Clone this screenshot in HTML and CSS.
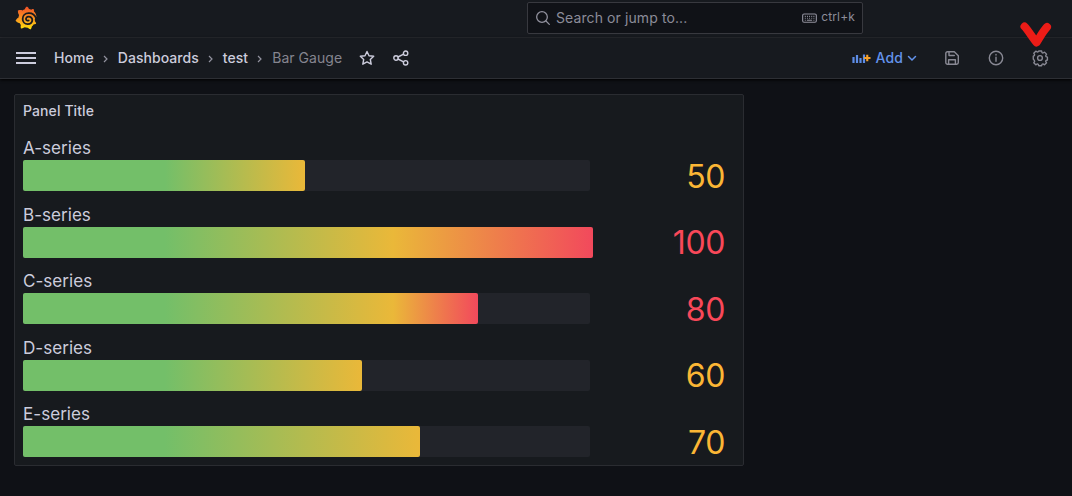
FILE: index.html
```html
<!DOCTYPE html>
<html lang="en">
<head>
<meta charset="utf-8">
<title>Bar Gauge</title>
<link rel="stylesheet" href="styles.css">
</head>
<body>
<header class="topbar">
  <svg class="logo" viewBox="0 0 351 365">
    <defs><linearGradient id="flame" x1="0" y1="1" x2="0" y2="0"><stop offset="0" stop-color="#ffe40a"/><stop offset=".4" stop-color="#fb9f1e"/><stop offset="1" stop-color="#f05028"/></linearGradient></defs>
    <path fill="url(#flame)" d="M342 161c-4-30-13-52-30-73-3-4-6-7-10-10 5-20-6-38-6-38-20-1-32 6-37 9-11-5-23-8-36-10C214 12 190 1 190 1c-27 17-32 41-32 41-15 4-27 10-40 19-38-14-72 3-72 3-3 40 15 65 19 70-5 13-7 26-9 40C19 193 9 228 9 228c29 33 63 36 63 36 6 11 14 21 22 30-10 30 2 55 2 55 32 1 53-14 58-17 16 5 34 8 52 7 15 22 42 25 42 25 19-20 20-40 20-45 13-9 23-21 32-35 22 1 37-13 37-13-4-23-17-34-20-36 1-12 0-25-2-37l15-27z"/>
    <path class="logo-spiral" d="M338 190C316 132 270 104 218 106C160 107 122 147 122 198C122 245 158 280 203 280C246 280 276 252 276 216C276 182 248 158 216 160C188 162 172 182 176 204C180 221 198 230 218 222"/>
  </svg>
  <div class="search">
    <svg class="search-icon" viewBox="0 0 24 24"><circle cx="10.5" cy="10.5" r="8"/><path d="M16.5 16.5l5 5"/></svg>
    <span class="search-text">Search or jump to...</span>
    <svg class="key-icon" viewBox="0 0 16 12"><rect x=".7" y="1.7" width="14.6" height="8.8" rx="1.5"/><path d="M3 4.3h1M5.3 4.3h1M7.6 4.3h1M9.9 4.3h1M12.2 4.3h1M3 6.3h1M5.3 6.3h1M7.6 6.3h1M9.9 6.3h1M12.2 6.3h1M3 8.4h1M5.2 8.4h5.6M12.2 8.4h1"/></svg>
    <span class="key-text">ctrl+k</span>
  </div>
</header>
<nav class="navbar">
  <svg class="menu" viewBox="0 0 20 14"><path d="M0 2h20M0 7h20M0 12h20"/></svg>
  <div class="crumbs">
    <span>Home</span>
    <svg class="sep" viewBox="0 0 5 8"><path d="M1 1l3 3-3 3"/></svg>
    <span>Dashboards</span>
    <svg class="sep" viewBox="0 0 5 8"><path d="M1 1l3 3-3 3"/></svg>
    <span>test</span>
    <svg class="sep" viewBox="0 0 5 8"><path d="M1 1l3 3-3 3"/></svg>
    <span class="current">Bar Gauge</span>
  </div>
  <svg class="icon bright star" viewBox="0 0 16 16"><path d="M8 1.5l2 4.2 4.7.6-3.4 3.2.9 4.7L8 11.9l-4.2 2.3.9-4.7L1.300 6.300l4.700-.6z"/></svg>
  <svg class="icon bright" viewBox="0 0 16 16"><circle cx="3" cy="8" r="2.2"/><circle cx="12.600" cy="3.200" r="2.200"/><circle cx="12.600" cy="12.800" r="2.200"/><path d="M5 7l5.600-2.800M5 9l5.600 2.800"/></svg>
  <div class="actions">
    <div class="add">
      <svg class="add-icon" viewBox="0 0 19 12"><path class="add-bars" d="M1.500 5v6M5 3v8M8.500 6v5M12 2.500V11"/><path class="add-plus" d="M12 6h6.500M15.250 2.750v6.500"/></svg>
      <span>Add</span>
      <svg class="caret" viewBox="0 0 10 7"><path d="M1.500 1.500L5 5l3.500-3.500"/></svg>
    </div>
    <svg class="icon" viewBox="0 0 16 16"><path d="M3.500 1.800h6.800l4 4v6.700a1.700 1.700 0 0 1-1.700 1.700H3.500a1.700 1.700 0 0 1-1.700-1.700V3.500a1.700 1.700 0 0 1 1.700-1.700zM5 2v3.500h5.300M4.600 14v-4.200h6.800V14"/></svg>
    <svg class="icon" viewBox="0 0 16 16"><circle cx="8" cy="8" r="6.700"/><path d="M8 7.300v4M8 4.400v.6"/></svg>
    <svg class="icon" viewBox="0 0 16 16"><path d="M6.500 1.200h3l.4 1.700 1 .4 1.600-.9 2.100 2.100-.9 1.600.4 1 1.400.4v3l-1.400.4-.4 1 .9 1.500-2.100 2.100-1.600-.9-1 .4-.4 1.400h-3l-.4-1.400-1-.4-1.600.9-2.100-2.100.9-1.500-.4-1L.9 9.500v-3l1-.4.4-1-.9-1.600 2.100-2.100 1.600.9 1-.4z" transform="translate(.4 -.2) scale(.97)"/><circle cx="8" cy="8" r="2.400"/></svg>
  </div>
</nav>
<svg class="pointer" viewBox="0 0 32 26"><path d="M4.500 4.500C8 8 12 15 16.500 20.500C20 15 22.500 10 27 5"/></svg>
<main class="page">
  <section class="panel">
    <h2 class="title">Panel Title</h2>
    <div class="gauges">
      <div class="gauge"><div class="name">A-series</div><div class="row"><div class="track"><div class="fill warm" style="width:282px"></div></div><div class="value">50</div></div></div>
      <div class="gauge"><div class="name">B-series</div><div class="row"><div class="track"><div class="fill hot" style="width:570px"></div></div><div class="value high">100</div></div></div>
      <div class="gauge"><div class="name">C-series</div><div class="row"><div class="track"><div class="fill hot" style="width:455px"></div></div><div class="value high">80</div></div></div>
      <div class="gauge"><div class="name">D-series</div><div class="row"><div class="track"><div class="fill warm" style="width:339px"></div></div><div class="value">60</div></div></div>
      <div class="gauge"><div class="name">E-series</div><div class="row"><div class="track"><div class="fill warm" style="width:397px"></div></div><div class="value">70</div></div></div>
    </div>
  </section>
</main>
</body>
</html>
```
FILE: styles.css
```css
* { box-sizing: border-box; }
body { margin: 0; height: 496px; overflow: hidden; background: #0f1116; color: #ccccdc; font: 14px/20px Inter, sans-serif; letter-spacing: .1px; }
svg { display: block; flex: none; fill: none; overflow: visible; }
.topbar { height: 38px; display: flex; align-items: flex-start; background: #171a1f; border-bottom: 1px solid #2a2c31; padding-left: 15px; }
.logo { width: 22px; height: 24px; margin-top: 6px; }
.logo-spiral { stroke: #171a1f; stroke-width: 29; stroke-linecap: round; }
.search { width: 336px; height: 32px; margin: 2px 0 0 490px; padding: 0 7px 0 7px; border: 1px solid #38393f; border-radius: 2px; background: #101217; display: flex; align-items: center; color: #8c8c99; }
.search-icon { width: 16px; height: 16px; stroke: #92929f; stroke-width: 1.9; stroke-linecap: round; }
.search-text { margin-left: 5px; flex: 1; }
.key-icon { width: 15px; height: 12px; stroke: #92929f; stroke-width: 1.2; }
.key-text { margin-left: 4px; font-size: 12px; line-height: 16px; padding-bottom: 2px; letter-spacing: .15px; }
.navbar { height: 41px; display: flex; align-items: center; background: #171a1f; border-bottom: 1px solid #2d2f34; padding: 0 24px 0 16px; box-shadow: 0 1px 3px #000; }
.menu { width: 20px; height: 14px; stroke: #ccccdc; stroke-width: 2; }
.crumbs { display: flex; align-items: center; margin-left: 18px; font-weight: 500; letter-spacing: .05px; }
.sep { width: 5px; height: 8px; margin: 1px 10px 0 9px; stroke: #92929f; stroke-width: 1.2; }
.current { color: #85858f; font-weight: 400; }
.icon { width: 16px; height: 16px; stroke: #898994; stroke-width: 1.4; stroke-linejoin: round; stroke-linecap: round; }
.bright { stroke: #ccccdc; margin-left: 18px; }
.star { margin-left: 17px; }
.actions { display: flex; align-items: center; gap: 28px; margin-left: auto; }
.add { display: flex; align-items: center; color: #6393ec; font-weight: 500; }
.add-icon { width: 19px; height: 12px; margin-right: 5px; }
.add-bars { stroke: #5d8ce6; stroke-width: 2.2; }
.add-plus { stroke: #f5a02c; stroke-width: 2.1; }
.caret { width: 10px; height: 7px; margin: 0 -1px 0 4px; stroke: #6393ec; stroke-width: 1.5; stroke-linecap: round; }
.pointer { position: absolute; left: 1020px; top: 22px; width: 32px; height: 26px; stroke: #ec1c17; stroke-width: 8; stroke-linecap: round; stroke-linejoin: round; }
.page { padding: 15px 14px; }
.panel { width: 730px; height: 372px; border: 1px solid #2a2c31; border-radius: 2px; background: #171a1e; padding: 0 18px 0 8px; }
.title { margin: 0; height: 40px; padding-top: 6px; font-size: 14px; line-height: 20px; font-weight: 500; }
.gauge { height: 66.5px; letter-spacing: 0; }
.name { height: 25px; font-size: 17.1px; line-height: 26px; }
.row { display: flex; align-items: center; justify-content: space-between; height: 31px; }
.track { width: 567px; height: 31px; border-radius: 2px; background: #22242a; }
.fill { height: 31px; border-radius: 2px; }
.warm { background: linear-gradient(90deg, #73bf69 142px, #eab839); }
.hot { background: linear-gradient(90deg, #73bf69 142px, #eab839 370px, #f2495c); }
.value { color: #fbb635; font-size: 32px; line-height: 31px; letter-spacing: -.4px; padding-top: 1px; }
.high { color: #f94859; }
```
